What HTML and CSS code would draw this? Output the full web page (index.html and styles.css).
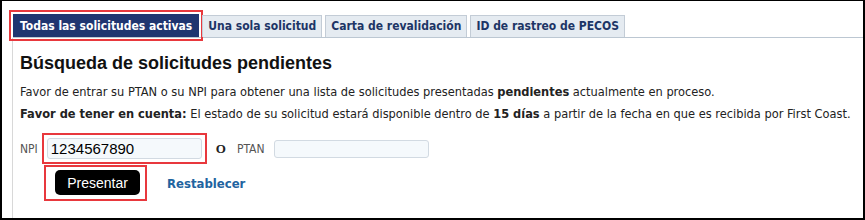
FILE: index.html
```html
<!DOCTYPE html>
<html lang="es">

<head>
    <meta charset="UTF-8">
    <title>Solicitudes pendientes</title>
    <link rel="stylesheet" href="styles.css">
</head>

<body>

    <div class="frame">
        <!-- Tabs -->
        <ul class="tabs">
            <li class="tab active">Todas las solicitudes activas</li>
            <li class="tab">Una sola solicitud</li>
            <li class="tab">Carta de revalidación</li>
            <li class="tab">ID de rastreo de PECOS</li>
        </ul>

        <!-- Panel -->
        <div class="panel">
            <h1>Búsqueda de solicitudes pendientes</h1>
            <p>Favor de entrar su PTAN o su NPI para obtener una lista de solicitudes presentadas <b>pendientes</b> actualmente en proceso.</p>
            <p><b>Favor de tener en cuenta:</b> El estado de su solicitud estará disponible dentro de <b>15 días</b> a partir de la fecha en que es recibida por First Coast.</p>

            <form class="search">
                <div class="fields">
                    <label for="npi">NPI</label>
                    <span class="highlight">
                        <input type="text" id="npi" value="1234567890">
                    </span>
                    <span class="or">O</span>
                    <label for="ptan">PTAN</label>
                    <input type="text" id="ptan" class="ptan">
                </div>
                <div class="actions">
                    <span class="highlight btn-wrap">
                        <button type="submit">Presentar</button>
                    </span>
                    <a href="#" class="reset">Restablecer</a>
                </div>
            </form>
        </div>
    </div>

</body>

</html>
```

FILE: styles.css
```css
* {
    margin: 0;
    padding: 0;
    box-sizing: border-box;
}

body {
    background: #fff;
    font-family: "DejaVu Sans Condensed", "DejaVu Sans", sans-serif;
    font-size: 12px;
    color: #222;
}

.frame {
    width: 865px;
    height: 220px;
    border: 2px solid #000;
    border-top-width: 1px;
    padding-top: 14px;
    overflow: hidden;
}

/* Tabs */
.tabs {
    display: flex;
    align-items: flex-end;
    gap: 3px;
    list-style: none;
    margin-left: 11px;
    border-bottom: 1px solid #bcc7d2;
    height: 23px;
}

.tab {
    height: 22px;
    padding: 0 5px;
    background: #e5ebf1;
    border: 1px solid #c3ccd6;
    border-bottom: none;
    color: #1d3566;
    font-weight: bold;
    font-size: 12px;
    line-height: 21px;
    white-space: nowrap;
}

.tab.active {
    height: 23px;
    padding: 0 6px;
    background: #1f3570;
    border-color: #1f3570;
    color: #fff;
    outline: 2px solid #e8383d;
    outline-offset: 2px;
    line-height: 22px;
}

/* Panel */
.panel {
    margin-left: 10px;
    border-left: 1px solid #d8d8d8;
    padding: 15px 0 0 7px;
    height: 200px;
}

h1 {
    font-family: "Liberation Sans", Arial, sans-serif;
    font-size: 18px;
    font-weight: bold;
    color: #111;
    margin-bottom: 7px;
}

p {
    font-size: 12.7px;
    line-height: 22px;
}

/* Form */
.search {
    margin-top: 8px;
}

.fields {
    display: flex;
    align-items: center;
}

label {
    color: #555;
    margin-right: 4px;
}

.highlight {
    display: inline-block;
    border: 2px solid #e8383d;
    padding: 3px;
}

input {
    width: 155px;
    height: 21px;
    border: 1px solid #d2dae2;
    border-radius: 3px;
    background: #f5f9fc;
    font-family: "Liberation Sans", Arial, sans-serif;
    font-size: 15px;
    padding: 0 3px;
    color: #000;
    outline: none;
}

.or {
    font-family: "Liberation Serif", serif;
    font-weight: bold;
    font-size: 13px;
    margin: 0 11px 0 9px;
}

.ptan {
    height: 18px;
    margin-left: 5px;
}

.actions {
    display: flex;
    align-items: center;
    margin-top: 1px;
    margin-left: 24px;
}

.btn-wrap {
    padding: 3px 5px 4px 9px;
}

button {
    width: 85px;
    height: 25px;
    background: #000;
    color: #fff;
    border: none;
    border-radius: 5px;
    font-family: "Liberation Sans", Arial, sans-serif;
    font-size: 14px;
    cursor: pointer;
}

.reset {
    margin-left: 20px;
    color: #1f64a0;
    font-weight: bold;
    font-size: 13px;
    text-decoration: none;
}
```
